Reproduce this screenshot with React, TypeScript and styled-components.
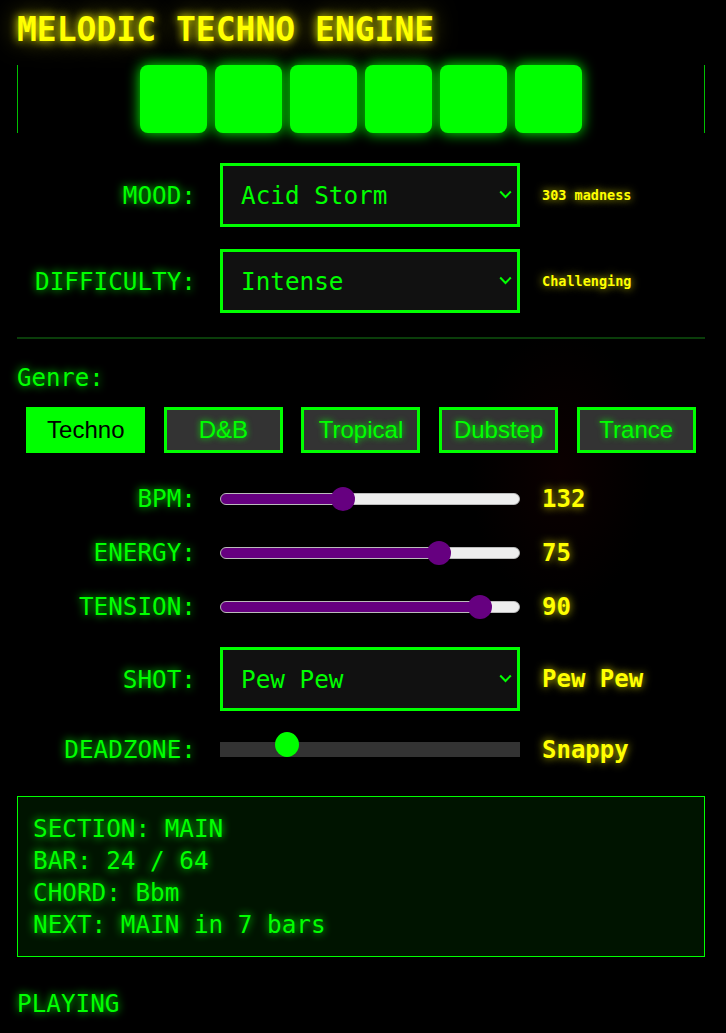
import React, { useState } from 'react';
import styled, { createGlobalStyle } from 'styled-components';

const GlobalStyle = createGlobalStyle`
  html, body {
    margin: 0;
    padding: 0;
    background: #000;
  }
  body {
    font-family: "DejaVu Sans Mono", monospace;
    color: #00ff00;
    background:
      radial-gradient(ellipse 90px 140px at 560px 470px, rgba(22, 0, 0, 0.5) 0, rgba(0, 0, 0, 0) 100%),
      #000;
    min-height: 1033px;
  }
`;

const Page = styled.div`
  padding: 10px 21px 0 17px;
  display: flex;
  flex-direction: column;
`;

const Title = styled.h1`
  margin: 0;
  font-size: 33px;
  font-weight: bold;
  line-height: 40px;
  color: #ffff00;
  text-shadow: 0 0 10px #ffff00, 0 0 24px rgba(255, 255, 0, 0.5);
`;

const PadRow = styled.div`
  margin-top: 15px;
  height: 68px;
  display: flex;
  justify-content: center;
  gap: 8px;
  border-left: 1px solid rgba(0, 255, 0, 0.75);
  border-right: 1px solid rgba(0, 255, 0, 0.75);
`;

const Pad = styled.div<{ $lit: boolean }>`
  width: 67px;
  height: 68px;
  border-radius: 8px;
  background: ${(p) => (p.$lit ? '#00ff00' : '#003300')};
  box-shadow: ${(p) => (p.$lit ? '0 0 14px #00ff00' : 'none')};
`;

const Row = styled.div<{ $top: number }>`
  display: flex;
  align-items: center;
  margin-top: ${(p) => p.$top}px;
`;

const Label = styled.label`
  width: 179px;
  text-align: right;
  margin-right: 24px;
  font-size: 24.3px;
  color: #00ff00;
  text-shadow: 0 0 8px #00ff00;
`;

const SelectWrap = styled.div`
  position: relative;
  width: 300px;
  height: 64px;
`;

const Select = styled.select`
  -webkit-appearance: none;
  appearance: none;
  width: 100%;
  height: 100%;
  box-sizing: border-box;
  background: #111;
  color: #00ff00;
  border: 3px solid #00ff00;
  border-radius: 0;
  padding: 0 40px 0 18px;
  font-family: "DejaVu Sans Mono", monospace;
  font-size: 24.3px;
  outline: none;
`;

const Chevron = styled.svg`
  position: absolute;
  right: 8px;
  top: 27px;
  width: 13px;
  height: 9px;
  pointer-events: none;
`;

const Hint = styled.span<{ $big?: boolean }>`
  margin-left: 22px;
  color: #ffff00;
  font-weight: bold;
  font-size: ${(p) => (p.$big ? '24px' : '13.5px')};
  text-shadow: 0 0 8px rgba(255, 255, 0, 0.8);
`;

const Divider = styled.hr`
  margin: 24px 0 0;
  border: none;
  height: 2px;
  background: #0a3d0a;
`;

const SectionTitle = styled.div`
  margin-top: 25px;
  font-size: 24px;
  text-shadow: 0 0 8px #00ff00;
`;

const GenreBar = styled.div`
  margin-top: 15px;
  display: flex;
  justify-content: space-around;
`;

const GenreButton = styled.button<{ $active: boolean }>`
  width: 119px;
  height: 46px;
  box-sizing: border-box;
  border: 3px solid #00ff00;
  border-radius: 0;
  background: ${(p) => (p.$active ? '#00ff00' : '#333')};
  color: ${(p) => (p.$active ? '#000' : '#00ff00')};
  font-family: "Liberation Sans", Arial, sans-serif;
  font-size: 24px;
  text-shadow: ${(p) => (p.$active ? 'none' : '0 0 6px #00ff00')};
  cursor: pointer;
  padding: 0;
`;

const Range = styled.input`
  -webkit-appearance: none;
  appearance: none;
  width: 300px;
  height: 12px;
  margin: 0;
  border-radius: 6px;
  border: 1px solid #bbb;
  box-sizing: border-box;
  outline: none;

  &::-webkit-slider-thumb {
    -webkit-appearance: none;
    width: 24px;
    height: 24px;
    border-radius: 50%;
    background: #660080;
    border: none;
  }
`;

const DeadTrack = styled.input`
  -webkit-appearance: none;
  appearance: none;
  width: 300px;
  height: 15px;
  margin: 0;
  background: transparent;
  outline: none;

  &::-webkit-slider-runnable-track {
    height: 15px;
    background: #333;
  }

  &::-webkit-slider-thumb {
    -webkit-appearance: none;
    width: 24px;
    height: 25px;
    margin-top: -10px;
    border-radius: 50%;
    background: #00ff00;
    border: none;
  }
`;

const StatusBox = styled.div`
  margin-top: 32px;
  border: 1px solid #00ff00;
  background: #001400;
  padding: 16px 15px 15px;
  font-size: 24.3px;
  line-height: 32px;
  text-shadow: 0 0 8px #00ff00;
`;

const PlayState = styled.div`
  margin-top: 32px;
  font-size: 24.3px;
  text-shadow: 0 0 8px #00ff00;
`;

const moods = [
  { name: 'Acid Storm', hint: '303 madness' },
  { name: 'Dark Drive', hint: 'Deep & driving' },
  { name: 'Euphoric', hint: 'Hands up' },
];

const difficulties = [
  { name: 'Chill', hint: 'Relaxed' },
  { name: 'Intense', hint: 'Challenging' },
  { name: 'Insane', hint: 'Brutal' },
];

const genres = ['Techno', 'D&B', 'Tropical', 'Dubstep', 'Trance'];

function pct(v: number, min: number, max: number) {
  return ((v - min) / (max - min)) * 100;
}

function Dropdown({ value, options, onChange }: {
  value: string;
  options: string[];
  onChange: (v: string) => void;
}) {
  return (
    <SelectWrap>
      <Select value={value} onChange={(e) => onChange(e.target.value)}>
        {options.map((o) => (
          <option key={o}>{o}</option>
        ))}
      </Select>
      <Chevron viewBox="0 0 13 9">
        <path d="M1.2 1.5 L6.5 7 L11.8 1.5" fill="none" stroke="#00ff00" strokeWidth="2" />
      </Chevron>
    </SelectWrap>
  );
}

function SliderRow({ label, value, min, max, top, onChange }: {
  label: string;
  value: number;
  min: number;
  max: number;
  top: number;
  onChange: (v: number) => void;
}) {
  const p = pct(value, min, max);
  return (
    <Row $top={top}>
      <Label>{label}:</Label>
      <Range
        type="range"
        min={min}
        max={max}
        value={value}
        onChange={(e) => onChange(Number(e.target.value))}
        style={{ background: `linear-gradient(to right, #660080 ${p}%, #eeeeee ${p}%)` }}
      />
      <Hint $big>{value}</Hint>
    </Row>
  );
}

export default function App() {
  const [mood, setMood] = useState('Acid Storm');
  const [difficulty, setDifficulty] = useState('Intense');
  const [genre, setGenre] = useState('Techno');
  const [bpm, setBpm] = useState(132);
  const [energy, setEnergy] = useState(75);
  const [tension, setTension] = useState(90);
  const [shot, setShot] = useState('Pew Pew');
  const [deadzone, setDeadzone] = useState(20);

  const moodHint = moods.find((m) => m.name === mood)?.hint;
  const diffHint = difficulties.find((d) => d.name === difficulty)?.hint;

  return (
    <>
      <GlobalStyle />
      <Page>
        <Title>MELODIC TECHNO ENGINE</Title>
        <PadRow>
          {[0, 1, 2, 3, 4, 5].map((i) => (
            <Pad key={i} $lit />
          ))}
        </PadRow>

        <Row $top={30}>
          <Label>MOOD:</Label>
          <Dropdown value={mood} options={moods.map((m) => m.name)} onChange={setMood} />
          <Hint>{moodHint}</Hint>
        </Row>
        <Row $top={22}>
          <Label>DIFFICULTY:</Label>
          <Dropdown value={difficulty} options={difficulties.map((d) => d.name)} onChange={setDifficulty} />
          <Hint>{diffHint}</Hint>
        </Row>

        <Divider />
        <SectionTitle>Genre:</SectionTitle>
        <GenreBar>
          {genres.map((g) => (
            <GenreButton key={g} $active={g === genre} onClick={() => setGenre(g)}>
              {g}
            </GenreButton>
          ))}
        </GenreBar>

        <SliderRow label="BPM" value={bpm} min={60} max={240} top={31} onChange={setBpm} />
        <SliderRow label="ENERGY" value={energy} min={0} max={100} top={25} onChange={setEnergy} />
        <SliderRow label="TENSION" value={tension} min={0} max={100} top={25} onChange={setTension} />

        <Row $top={26}>
          <Label>SHOT:</Label>
          <Dropdown value={shot} options={['Pew Pew', 'Laser', 'Boom']} onChange={setShot} />
          <Hint $big>{shot}</Hint>
        </Row>
        <Row $top={24}>
          <Label>DEADZONE:</Label>
          <DeadTrack
            type="range"
            min={0}
            max={100}
            value={deadzone}
            onChange={(e) => setDeadzone(Number(e.target.value))}
          />
          <Hint $big>Snappy</Hint>
        </Row>

        <StatusBox>
          <div>SECTION: MAIN</div>
          <div>BAR: 24 / 64</div>
          <div>CHORD: Bbm</div>
          <div>NEXT: MAIN in 7 bars</div>
        </StatusBox>
        <PlayState>PLAYING</PlayState>
      </Page>
    </>
  );
}
